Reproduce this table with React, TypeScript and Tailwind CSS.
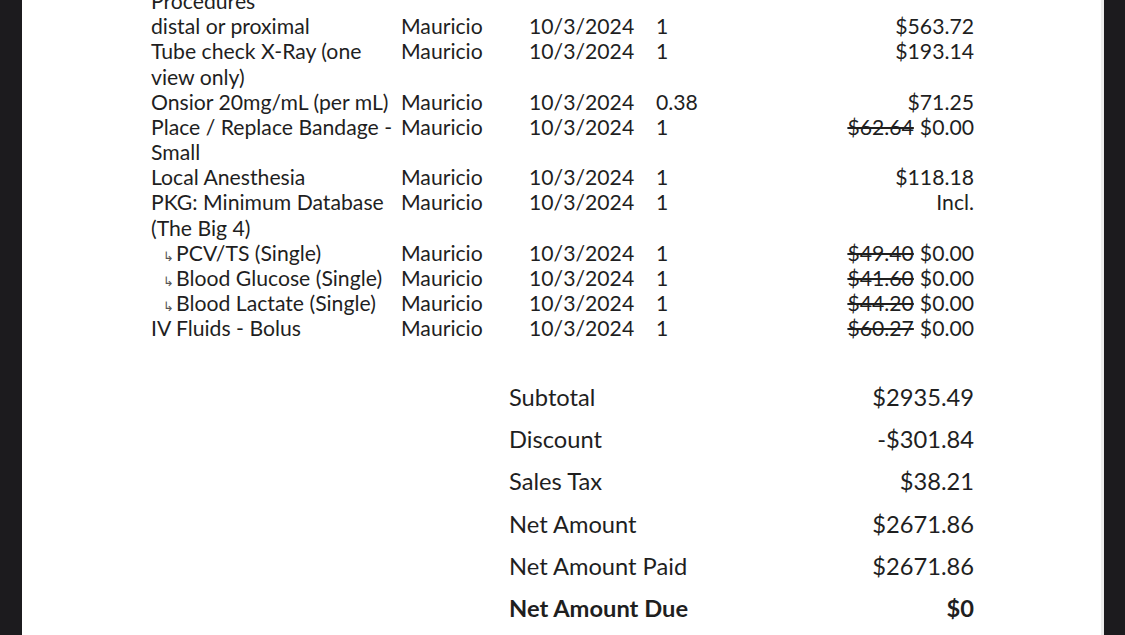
const items = [
  { desc: "Procedures", emp: "", date: "", qty: "", amt: null },
  { desc: "distal or proximal", emp: "Mauricio", date: "10/3/2024", qty: "1", amt: "$563.72" },
  { desc: "Tube check X-Ray (one view only)", emp: "Mauricio", date: "10/3/2024", qty: "1", amt: "$193.14" },
  { desc: "Onsior 20mg/mL (per mL)", emp: "Mauricio", date: "10/3/2024", qty: "0.38", amt: "$71.25" },
  { desc: "Place / Replace Bandage - Small", emp: "Mauricio", date: "10/3/2024", qty: "1", amt: "$0.00", was: "$62.64" },
  { desc: "Local Anesthesia", emp: "Mauricio", date: "10/3/2024", qty: "1", amt: "$118.18" },
  { desc: "PKG: Minimum Database (The Big 4)", emp: "Mauricio", date: "10/3/2024", qty: "1", amt: "Incl." },
  { desc: "PCV/TS (Single)", sub: true, emp: "Mauricio", date: "10/3/2024", qty: "1", amt: "$0.00", was: "$49.40" },
  { desc: "Blood Glucose (Single)", sub: true, emp: "Mauricio", date: "10/3/2024", qty: "1", amt: "$0.00", was: "$41.60" },
  { desc: "Blood Lactate (Single)", sub: true, emp: "Mauricio", date: "10/3/2024", qty: "1", amt: "$0.00", was: "$44.20" },
  { desc: "IV Fluids - Bolus", emp: "Mauricio", date: "10/3/2024", qty: "1", amt: "$0.00", was: "$60.27" },
];

const totals = [
  { label: "Subtotal", value: "$2935.49" },
  { label: "Discount", value: "-$301.84" },
  { label: "Sales Tax", value: "$38.21" },
  { label: "Net Amount", value: "$2671.86" },
  { label: "Net Amount Paid", value: "$2671.86" },
  { label: "Net Amount Due", value: "$0", bold: true },
];

export default function App() {
  return (
    <div
      className="w-[1125px] h-[635px] overflow-hidden flex bg-[#1c1b1e] text-[#1f1f1f]"
      style={{ fontFamily: "Lato, 'Liberation Sans', sans-serif" }}
    >
      <div className="w-[22px] shrink-0" />
      <div className="w-[1082px] shrink-0 bg-white border-r-[3px] border-[#ececec] overflow-hidden">
        <div className="pl-[129px] -mt-[11px]">
          <div className="w-[823px] text-[21.2px] leading-[25.17px]">
            {items.map((it, i) => (
              <div key={i} className="grid grid-cols-[250px_128px_127px_1fr]">
                <div className="pr-[4px]">
                  {it.sub ? (
                    <span className="pl-[12px]">
                      <span className="text-[13px] leading-none text-[#555] mr-[2px]">↳</span>
                      {it.desc}
                    </span>
                  ) : (
                    it.desc
                  )}
                </div>
                <div>{it.emp}</div>
                <div>{it.date}</div>
                <div className="flex justify-between">
                  <span>{it.qty}</span>
                  <span>
                    {it.was && <span className="line-through mr-[6px]">{it.was}</span>}
                    {it.amt}
                  </span>
                </div>
              </div>
            ))}
          </div>
          <div className="ml-[358px] w-[465px] mt-[35px] text-[23.7px]">
            {totals.map((t) => (
              <div
                key={t.label}
                className={`flex justify-between h-[42.3px] items-center ${t.bold ? "font-bold" : ""}`}
              >
                <span>{t.label}</span>
                <span>{t.value}</span>
              </div>
            ))}
          </div>
        </div>
      </div>
      <div className="flex-1" />
    </div>
  );
}
